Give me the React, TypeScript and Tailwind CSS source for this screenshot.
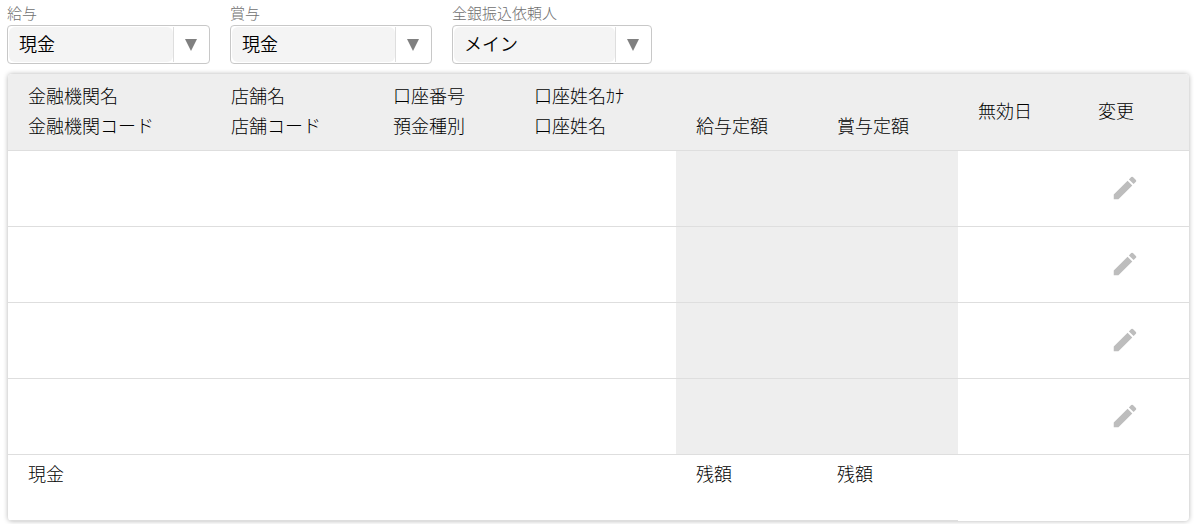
import { MdEdit } from 'react-icons/md';

const filters = [
  { id: 'salary', label: '給与', width: 'w-[203px]', options: ['現金', '振込'] },
  { id: 'bonus', label: '賞与', width: 'w-[202px]', options: ['現金', '振込'] },
  { id: 'client', label: '全銀振込依頼人', width: 'w-[200px]', options: ['メイン', 'サブ'] },
];

const columns = [
  { lines: ['金融機関名', '金融機関コード'], width: 'w-[203px]' },
  { lines: ['店舗名', '店舗コード'], width: 'w-[162px]' },
  { lines: ['口座番号', '預金種別'], width: 'w-[141px]' },
  { lines: ['口座姓名ｶﾅ', '口座姓名'], width: 'w-[162px]' },
  { lines: ['', '給与定額'], width: 'w-[141px]' },
  { lines: ['', '賞与定額'], width: 'w-[141px]' },
  { lines: ['無効日'], width: 'w-[120px]' },
  { lines: ['変更'], width: 'w-auto' },
];

const rows = [1, 2, 3, 4];
const footer = ['現金', '', '', '', '残額', '残額'];

function FilterSelect({ id, label, width, options }: (typeof filters)[number]) {
  return (
    <div className={width}>
      <label htmlFor={id} className="block h-[22px] whitespace-nowrap text-[15px] leading-5 text-[#707070]">
        {label}
      </label>
      <div className="relative flex h-[39px] rounded border border-[#c8c8c8] bg-white p-px">
        <span className="flex-1 rounded-md bg-[#f4f4f4]" />
        <span className="flex w-[35px] items-center justify-center border-l border-[#dedede]">
          <svg width="12" height="12" viewBox="0 0 12 12" aria-hidden="true">
            <path d="M0 0h12L6 12z" fill="#808080" />
          </svg>
        </span>
        <select
          id={id}
          className="absolute inset-0 w-full cursor-pointer appearance-none rounded bg-transparent pr-10 pb-0.5 pl-[11px] text-[18px] font-[350] text-black"
        >
          {options.map((o) => (
            <option key={o}>{o}</option>
          ))}
        </select>
      </div>
    </div>
  );
}

export default function App() {
  return (
    <main className="bg-white pt-[3px] pb-[3px] font-['Noto_Sans_CJK_JP',sans-serif] text-[18px] font-light text-black">
      <form className="flex flex-wrap gap-5 px-[7px]">
        {filters.map((f) => (
          <FilterSelect key={f.id} {...f} />
        ))}
      </form>

      <div className="mt-[10px] mr-[5px] ml-2 overflow-hidden rounded shadow-[0_0_5px_rgba(0,0,0,0.3)]">
        <table className="w-full table-fixed border-separate border-spacing-0 text-left leading-[30px]">
          <thead className="bg-[#eeeeee]">
            <tr className="h-[77px]">
              {columns.map((col) => (
                <th
                  key={col.lines.join()}
                  scope="col"
                  className={`${col.width} border-b border-[#dedede] pt-0 pr-0 pb-1 pl-5 align-middle font-light whitespace-nowrap`}
                >
                  {col.lines.map((line, i) => (
                    <div key={i} className="h-[30px]">{line}</div>
                  ))}
                </th>
              ))}
            </tr>
          </thead>
          <tbody>
            {rows.map((row) => (
              <tr key={row} className="h-[76px]">
                {columns.slice(0, 7).map((col, i) => (
                  <td
                    key={i}
                    className={`border-b border-[#dedede] pl-5 ${i === 4 || i === 5 ? 'bg-[#eeeeee]' : ''}`}
                  />
                ))}
                <td className="border-b border-[#dedede] pt-0 pr-0 pb-0.5 pl-5 align-middle">
                  <button type="button" aria-label="変更" className="block cursor-pointer p-3 text-[#bdbdbd]">
                    <MdEdit size={30} />
                  </button>
                </td>
              </tr>
            ))}
          </tbody>
          <tfoot>
            <tr className="h-[66px] align-top">
              {footer.map((text, i) => (
                <td key={i} className="border-b border-[#dedede] pt-[3px] pl-5">{text}</td>
              ))}
              <td />
              <td />
            </tr>
          </tfoot>
        </table>
      </div>
    </main>
  );
}
